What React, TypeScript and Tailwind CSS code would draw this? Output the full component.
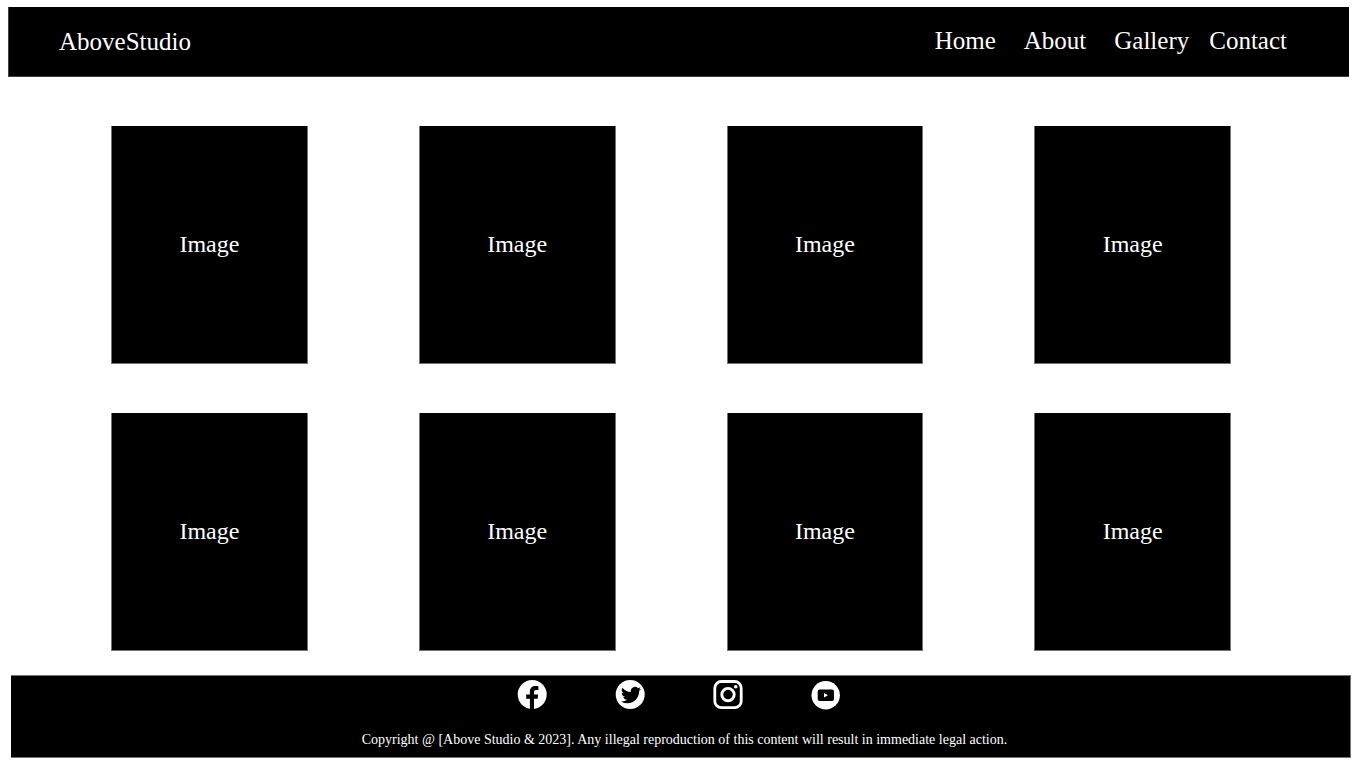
const links = [
  { label: "Home", spacing: "ml-0" },
  { label: "About", spacing: "ml-7" },
  { label: "Gallery", spacing: "ml-7" },
  { label: "Contact", spacing: "ml-5" },
];

const tiles = [1, 2, 3, 4, 5, 6, 7, 8];

function FacebookIcon() {
  return (
    <svg viewBox="0 0 30 30" className="size-[30px]" aria-hidden="true">
      <circle cx="15.2" cy="14.5" r="14.5" fill="#fff" />
      <path
        fill="#000"
        d="M12.9 30V18.8H9.2v-4.2h3.7v-2.9c0-3.8 2.2-5.7 5.7-5.7 1.6 0 2.5.2 2.8.3v3.6h-1.9c-1.9 0-2.5.9-2.5 2.1v2.6h4.2l-.6 4.2H17V30z"
      />
    </svg>
  );
}

function TwitterIcon() {
  return (
    <svg viewBox="0 0 30 30" className="size-[30px]" aria-hidden="true">
      <circle cx="15.2" cy="14.5" r="14.5" fill="#fff" />
      <path
        fill="#000"
        transform="translate(6 5) scale(.84)"
        d="M23.95 4.57a10 10 0 0 1-2.82.77 4.96 4.96 0 0 0 2.16-2.72c-.95.56-2 .96-3.13 1.18a4.92 4.92 0 0 0-8.38 4.48C7.69 8.1 4.07 6.13 1.64 3.16a4.92 4.92 0 0 0 1.52 6.57 4.9 4.9 0 0 1-2.23-.61v.06a4.92 4.92 0 0 0 3.95 4.83 5 5 0 0 1-2.21.08 4.94 4.94 0 0 0 4.6 3.42A9.87 9.87 0 0 1 0 19.54a14 14 0 0 0 7.55 2.21c9.05 0 14-7.5 14-13.98 0-.21 0-.42-.02-.63a9.94 9.94 0 0 0 2.42-2.57z"
      />
    </svg>
  );
}

function InstagramIcon() {
  return (
    <svg viewBox="0 0 30 30" className="size-[30px]" fill="none" aria-hidden="true">
      <rect x="1.8" y="1.5" width="26.4" height="26.2" rx="6.5" stroke="#fff" strokeWidth="2.8" />
      <circle cx="15" cy="14.6" r="6.2" stroke="#fff" strokeWidth="2.9" />
      <circle cx="22.7" cy="6.8" r="1.8" fill="#fff" />
    </svg>
  );
}

function YoutubeIcon() {
  return (
    <svg viewBox="0 0 30 30" className="size-[30px]" aria-hidden="true">
      <circle cx="14.7" cy="15.3" r="14.2" fill="#fff" />
      <rect x="6.7" y="9.5" width="16.3" height="11.6" rx="2" fill="#000" />
      <path d="M13 13v4.6l4-2.3z" fill="#fff" />
    </svg>
  );
}

const socials = [
  { name: "Facebook", Icon: FacebookIcon },
  { name: "Twitter", Icon: TwitterIcon },
  { name: "Instagram", Icon: InstagramIcon },
  { name: "YouTube", Icon: YoutubeIcon },
];

export default function App() {
  return (
    <div className="bg-white pt-[7px] pb-2 font-['Liberation_Serif',serif] text-white">
      <header className="mr-[17px] ml-2 flex h-[70px] items-center justify-between border-b border-l border-neutral-700 bg-black pr-[62px] pl-[50px] leading-8">
        <a href="#top" className="text-[25px]">AboveStudio</a>
        <nav className="flex pb-[2px] text-[25px]" aria-label="Main">
          {links.map(({ label, spacing }) => (
            <a key={label} href={`#${label.toLowerCase()}`} className={spacing}>
              {label}
            </a>
          ))}
        </nav>
      </header>

      <main className="grid grid-cols-4 gap-x-[111px] gap-y-[49px] pt-[49px] pr-[135px] pb-6 pl-[111px]">
        {tiles.map((tile) => (
          <div
            key={tile}
            className="flex h-[238px] items-center justify-center border-x border-b border-neutral-500 bg-black pb-[2px] text-2xl"
          >
            Image
          </div>
        ))}
      </main>

      <footer className="mr-[15px] ml-[11px] flex h-[83px] flex-col items-center border-y border-r border-neutral-500 bg-black pt-1">
        <div className="flex gap-17 pr-1">
          {socials.map(({ name, Icon }) => (
            <a key={name} href={`#${name.toLowerCase()}`} aria-label={name}>
              <Icon />
            </a>
          ))}
        </div>
        <p className="mt-5 pl-2 text-sm">
          Copyright @ [Above Studio &amp; 2023]. Any illegal reproduction of this content will result in immediate legal action.
        </p>
      </footer>
    </div>
  );
}
